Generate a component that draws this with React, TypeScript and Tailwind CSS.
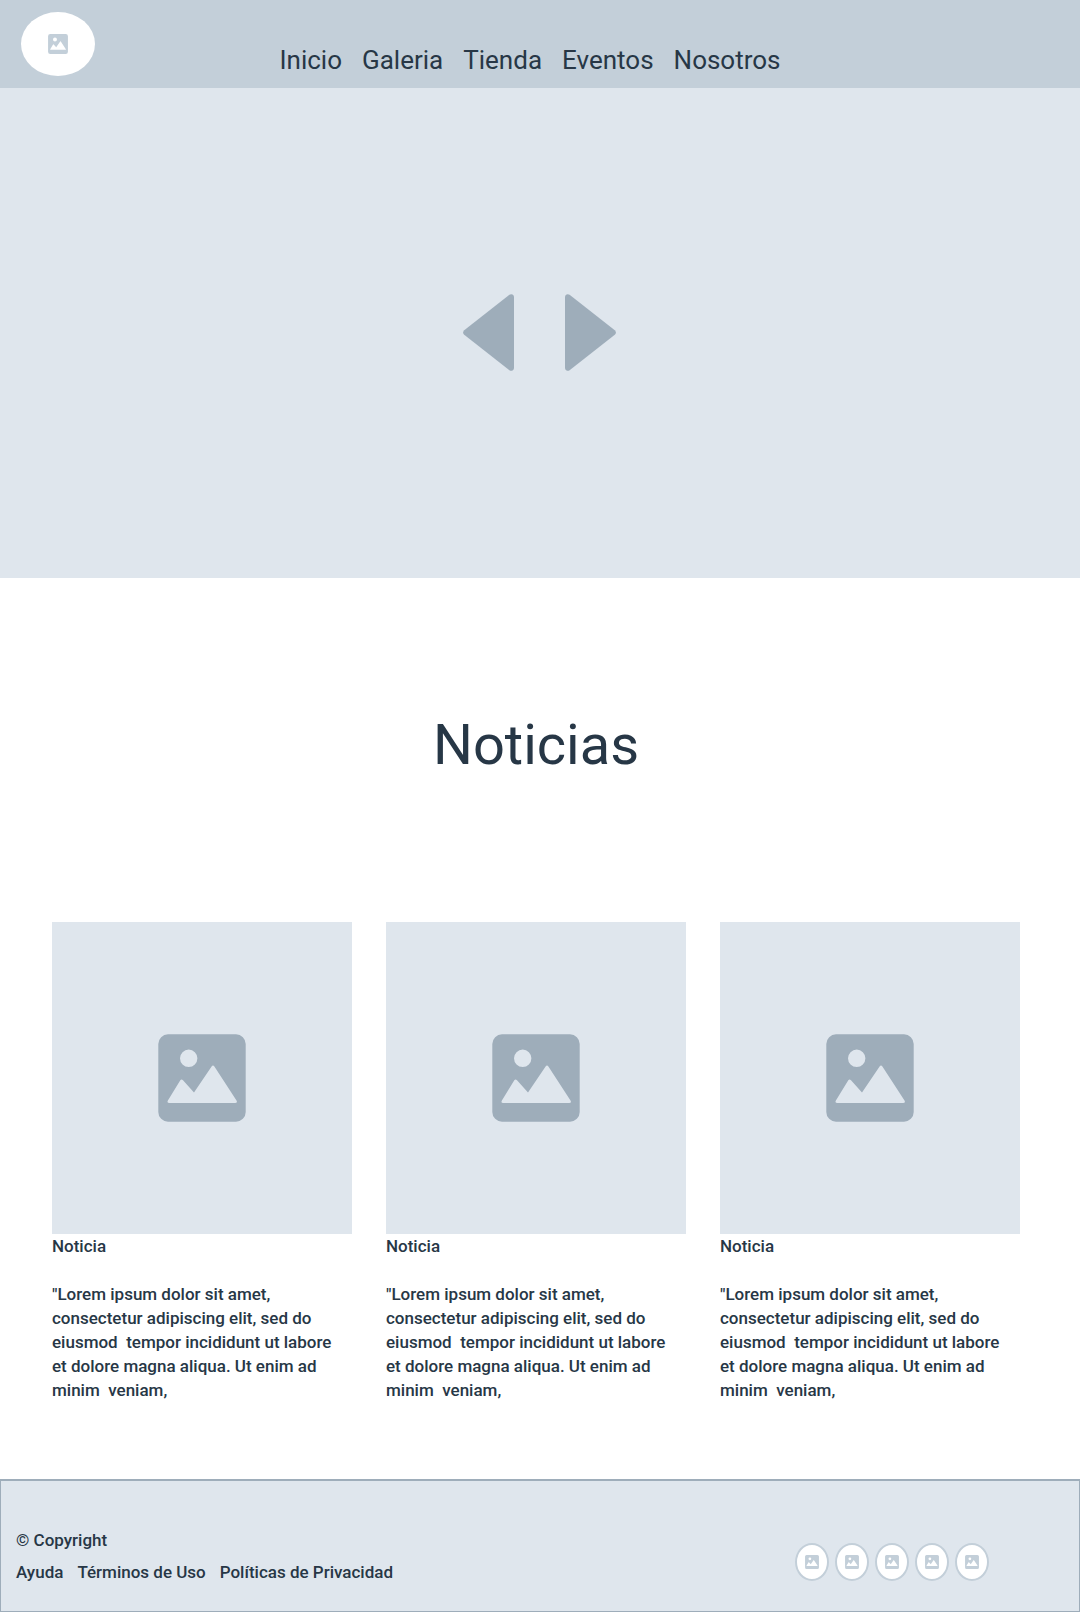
type ImageIconProps = { className: string };

function ImageIcon({ className }: ImageIconProps) {
  return (
    <svg viewBox="0 0 88 88" className={className} aria-hidden="true">
      <path
        fill="currentColor"
        fillRule="evenodd"
        d="M10 .3H78A9.7 9.7 0 0 1 87.7 10V78A9.7 9.7 0 0 1 78 87.7H10A9.7 9.7 0 0 1 .3 78V10A9.7 9.7 0 0 1 10 .3ZM30.7 15.6A8.7 8.7 0 1 0 30.7 33A8.7 8.7 0 1 0 30.7 15.6ZM22.3 46.2L9.9 66.6Q8.6 69 11.2 69H77.2Q79.8 69 78.5 66.6L56.4 32.6Q55 30.6 53.6 32.6L36 58.6L25 46.2Q23.5 44.7 22.3 46.2Z"
      />
    </svg>
  );
}

const navItems = ["Inicio", "Galeria", "Tienda", "Eventos", "Nosotros"];
const footerLinks = ["Ayuda", "Términos de Uso", "Políticas de Privacidad"];
const socialLinks = [1, 2, 3, 4, 5];

const newsText = `"Lorem ipsum dolor sit amet,
consectetur adipiscing elit, sed do
eiusmod  tempor incididunt ut labore
et dolore magna aliqua. Ut enim ad
minim  veniam,`;

const news = [1, 2, 3].map((id) => ({ id, title: "Noticia", text: newsText }));

function Header() {
  return (
    <header className="grid h-22 grid-cols-[1fr_auto_1fr] bg-[#c3cfd9] pl-[21px] pr-[41px]">
      <a
        href="#"
        aria-label="Logo"
        className="mt-3 flex h-16 w-[74px] items-center justify-center rounded-[50%] bg-white text-[#c3cfd9]"
      >
        <ImageIcon className="size-5" />
      </a>
      <nav className="mt-11 flex gap-5 text-[26px] leading-8">
        {navItems.map((item) => (
          <a key={item} href="#">
            {item}
          </a>
        ))}
      </nav>
    </header>
  );
}

function Carousel() {
  return (
    <section className="flex h-[490px] items-center justify-center gap-[51px] bg-[#dfe6ed] pr-[2px] pb-[2px] text-[#9eadba]">
      <button type="button" aria-label="Anterior">
        <svg viewBox="0 0 51 77" className="h-[77px] w-[51px]" aria-hidden="true">
          <path
            fill="currentColor"
            d="M46.4 .7Q48 -.3 49.5 .5Q51 1.4 51 3V74Q51 75.6 49.5 76.5Q48 77.3 46.4 76.3L1.2 40.8Q-1 38.5 1.2 36.2Z"
          />
        </svg>
      </button>
      <button type="button" aria-label="Siguiente">
        <svg viewBox="0 0 51 77" className="h-[77px] w-[51px]" aria-hidden="true">
          <path
            fill="currentColor"
            d="M4.6 .7Q3 -.3 1.5 .5Q0 1.4 0 3V74Q0 75.6 1.5 76.5Q3 77.3 4.6 76.3L49.8 40.8Q52 38.5 49.8 36.2Z"
          />
        </svg>
      </button>
    </section>
  );
}

function News() {
  return (
    <main className="pt-[132px] pr-[60px] pb-[77px] pl-[52px]">
      <h1 className="text-center text-[56px] leading-[70px]">Noticias</h1>
      <div className="mt-[142px] grid grid-cols-3 gap-[34px]">
        {news.map((item) => (
          <article key={item.id} className="text-[17px] leading-6 font-medium">
            <div className="flex h-[312px] items-center justify-center bg-[#dfe6ed] text-[#9eadba]">
              <ImageIcon className="size-22" />
            </div>
            <h2>{item.title}</h2>
            <p className="mt-6 whitespace-pre-wrap">{item.text}</p>
          </article>
        ))}
      </div>
    </main>
  );
}

function Footer() {
  return (
    <footer className="flex justify-between border border-t-2 border-[#9eadba] bg-[#dfe6ed] pt-[47px] pr-[90px] pb-[27px] pl-[15px] text-[17px] leading-6 font-medium">
      <div className="flex flex-col gap-2">
        <p>© Copyright</p>
        <div className="flex gap-[14px]">
          {footerLinks.map((link) => (
            <a key={link} href="#">
              {link}
            </a>
          ))}
        </div>
      </div>
      <div className="mt-[15px] flex gap-[6px]">
        {socialLinks.map((id) => (
          <a
            key={id}
            href="#"
            aria-label={`Red social ${id}`}
            className="flex h-[38px] w-[34px] items-center justify-center rounded-[50%] border-2 border-[#c3cfd9] bg-white text-[#c3cfd9]"
          >
            <ImageIcon className="size-[14px]" />
          </a>
        ))}
      </div>
    </footer>
  );
}

export default function App() {
  return (
    <div className="bg-white font-[Roboto,sans-serif] text-[#273746]">
      <Header />
      <Carousel />
      <News />
      <Footer />
    </div>
  );
}
